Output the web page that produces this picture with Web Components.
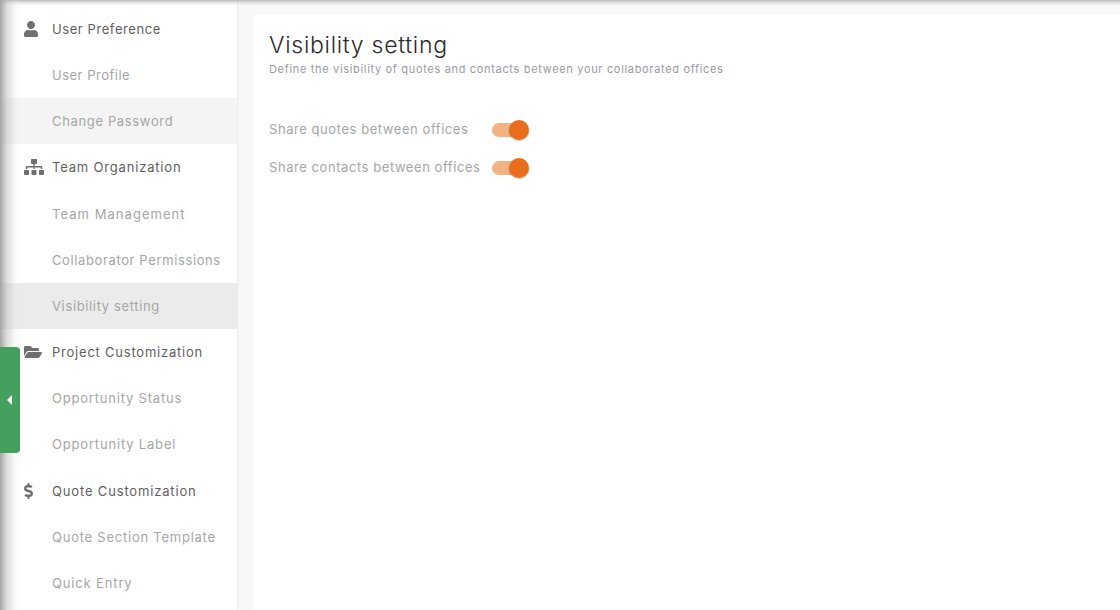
<!DOCTYPE html>
<html>
<head>
<meta charset="utf-8">
<title>Visibility setting</title>
<style>
  html, body { margin: 0; height: 610px; overflow: hidden; background: #f8f8f8; }
  body { font-family: Inter, "Liberation Sans", sans-serif; }
</style>
</head>
<body>
<settings-page>
  <settings-nav slot="nav">
    <nav-item icon="user" heading>User Preference</nav-item>
    <nav-item style="letter-spacing:.5px">User Profile</nav-item>
    <nav-item style="letter-spacing:.65px" hovered>Change Password</nav-item>
    <nav-item style="letter-spacing:.82px" icon="sitemap" heading>Team Organization</nav-item>
    <nav-item style="letter-spacing:1.05px">Team Management</nav-item>
    <nav-item style="letter-spacing:.62px">Collaborator Permissions</nav-item>
    <nav-item style="letter-spacing:.64px" active>Visibility setting</nav-item>
    <nav-item style="letter-spacing:.78px" icon="folder" heading>Project Customization</nav-item>
    <nav-item style="letter-spacing:.8px">Opportunity Status</nav-item>
    <nav-item style="letter-spacing:.82px">Opportunity Label</nav-item>
    <nav-item style="letter-spacing:.84px" icon="dollar" heading>Quote Customization</nav-item>
    <nav-item style="letter-spacing:.76px">Quote Section Template</nav-item>
    <nav-item style="letter-spacing:.85px">Quick Entry</nav-item>
  </settings-nav>
  <settings-card heading="Visibility setting" sub="Define the visibility of quotes and contacts between your collaborated offices">
    <toggle-row checked>Share quotes between offices</toggle-row>
    <toggle-row checked>Share contacts between offices</toggle-row>
  </settings-card>
  <collapse-tab slot="overlay"></collapse-tab>
</settings-page>

<script>
(function() {

    // Font Awesome style glyphs, viewBox width first
    const ICONS = {
        user: [448, 'M224 256c70.7 0 128-57.3 128-128S294.7 0 224 0 96 57.3 96 128s57.3 128 128 128zm89.6 32h-16.7c-22.2 10.2-46.9 16-72.9 16s-50.6-5.8-72.9-16h-16.7C60.2 288 0 348.2 0 422.4V464c0 26.5 21.5 48 48 48h352c26.5 0 48-21.5 48-48v-41.6c0-74.2-60.2-134.4-134.4-134.4z'],
        sitemap: [640, 'M128 352H32c-17.67 0-32 14.33-32 32v96c0 17.67 14.33 32 32 32h96c17.67 0 32-14.33 32-32v-96c0-17.67-14.33-32-32-32zm-24-80h192v48h48v-48h192v48h48v-57.59c0-21.17-17.23-38.41-38.41-38.41H344v-64h40c17.67 0 32-14.33 32-32V32c0-17.67-14.33-32-32-32H256c-17.67 0-32 14.33-32 32v96c0 17.67 14.33 32 32 32h40v64H94.41C73.23 224 56 241.23 56 262.41V320h48v-48zm264 80h-96c-17.67 0-32 14.33-32 32v96c0 17.67 14.33 32 32 32h96c17.67 0 32-14.33 32-32v-96c0-17.67-14.33-32-32-32zm240 0h-96c-17.67 0-32 14.33-32 32v96c0 17.67 14.33 32 32 32h96c17.67 0 32-14.33 32-32v-96c0-17.67-14.33-32-32-32z'],
        folder: [576, 'M572.694 292.093L500.27 416.248A63.997 63.997 0 0 1 444.989 448H45.025c-18.523 0-30.064-20.093-20.731-36.093l72.424-124.155A64 64 0 0 1 152 256h399.964c18.523 0 30.064 20.093 20.73 36.093zM152 224h328v-48c0-26.51-21.49-48-48-48H272l-64-64H48C21.49 64 0 85.49 0 112v278.046l69.077-118.418C86.214 242.25 117.989 224 152 224z'],
        dollar: [288, 'M209.2 233.4l-108-31.6C88.7 198.2 80 186.5 80 173.5c0-16.3 13.2-29.5 29.5-29.5h66.3c12.2 0 24.2 3.7 34.2 10.5 6.1 4.1 14.3 3.1 19.5-2l34.8-34c7.1-6.9 6.1-18.4-1.8-24.5C238 74.8 207.4 64.1 176 64V16c0-8.8-7.2-16-16-16h-32c-8.8 0-16 7.2-16 16v48h-2.5C45.8 64-5.4 118.7.5 183.6c4.2 46.1 39.4 83.6 83.8 96.6l102.5 30c12.5 3.7 21.2 15.3 21.2 28.3 0 16.3-13.2 29.5-29.5 29.5h-66.3C100 368 88 364.3 78 357.5c-6.1-4.1-14.3-3.1-19.5 2l-34.8 34c-7.1 6.9-6.1 18.4 1.8 24.5 24.5 19.2 55.1 29.9 86.5 30v48c0 8.8 7.2 16 16 16h32c8.8 0 16-7.2 16-16v-48.2c46.6-.9 90.3-28.6 105.7-72.7 21.5-61.6-14.6-124.8-72.5-141.7z']
    };

    class SettingsPage extends HTMLElement {
        constructor() {
            super();
            this.attachShadow({mode: 'open'});
            this.shadowRoot.innerHTML = `
                <style>
                  :host { display: block; position: relative; height: 610px; overflow: hidden; }
                  .layout { display: flex; height: 100%; gap: 16px; }
                  /* top and left edge shadows thrown by the app frame */
                  .edge-top, .edge-left { position: absolute; pointer-events: none; left: 0; top: 0; }
                  .edge-top { width: 100%; height: 6px; background: linear-gradient(#b9b9b9, rgba(200,200,200,.35) 50%, rgba(255,255,255,0)); }
                  .edge-left { width: 22px; height: 100%; background: linear-gradient(90deg, #a6a6a6, rgba(190,190,190,.55) 30%, rgba(230,230,230,.2) 70%, rgba(255,255,255,0)); }
                </style>
                <div class="layout"><slot name="nav"></slot><slot></slot></div>
                <div class="edge-top"></div>
                <div class="edge-left"></div>
                <slot name="overlay"></slot>`;
        }
    }

    class SettingsNav extends HTMLElement {
        constructor() {
            super();
            this.attachShadow({mode: 'open'});
            this.shadowRoot.innerHTML = `
                <style>
                  :host { display: block; flex: 0 0 237px; box-sizing: border-box; height: 610px; padding-top: 5.89px; background: #fff; box-shadow: 1px 0 2px rgba(0,0,0,.06); overflow: hidden; }
                </style>
                <slot></slot>`;
        }
    }

    class NavItem extends HTMLElement {
        constructor() {
            super();
            this.attachShadow({mode: 'open'});
            const icon = ICONS[this.getAttribute('icon')];
            const svg = icon ? `<svg viewBox="0 0 ${icon[0]} 512" height="16" width="${16 * icon[0] / 512}"><path fill="#6f6f6f" d="${icon[1]}"/></svg>` : '';
            this.shadowRoot.innerHTML = `
                <style>
                  :host { display: flex; align-items: center; height: 46.17px; padding-left: 24px; font-size: 13px; letter-spacing: .58px; color: #a6a6a6; }
                  :host([heading]) { color: #5f5f5f; }
                  :host([hovered]) { background: #f4f4f4; }
                  :host([active]) { background: #ebebeb; }
                  .ico { flex: 0 0 28px; display: flex; align-items: center; }
                </style>
                <span class="ico">${svg}</span><slot></slot>`;
        }
    }

    class SettingsCard extends HTMLElement {
        constructor() {
            super();
            this.attachShadow({mode: 'open'});
            this.shadowRoot.innerHTML = `
                <style>
                  :host { display: block; flex: 1; margin-top: 14px; padding: 16px; height: 640px; background: #fff; border-radius: 4px 0 0 0; box-shadow: 0 0 2px rgba(0,0,0,.05); }
                  h1 { margin: 0; font-size: 23px; line-height: 30px; font-weight: 300; letter-spacing: .72px; color: #2b2b2b; }
                  p { margin: 3px 0 41px; font-size: 11px; line-height: 13px; letter-spacing: .67px; color: #9a9aa3; }
                  .rows { display: flex; flex-direction: column; gap: 13px; }
                </style>
                <h1></h1>
                <p></p>
                <div class="rows"><slot></slot></div>`;
            this.shadowRoot.querySelector('h1').textContent = this.getAttribute('heading');
            this.shadowRoot.querySelector('p').textContent = this.getAttribute('sub');
        }
    }

    class ToggleRow extends HTMLElement {
        constructor() {
            super();
            this.attachShadow({mode: 'open'});
            this.shadowRoot.innerHTML = `
                <style>
                  :host { display: flex; align-items: center; gap: 12px; height: 25px; font-size: 13px; letter-spacing: .56px; color: #a6a6a6; }
                  .track { position: relative; width: 34px; height: 14px; border-radius: 7px; background: #f3b283; }
                  .knob { position: absolute; right: -3px; top: -3px; width: 20px; height: 20px; border-radius: 50%; background: #e96d1b; box-shadow: 0 1px 2px rgba(0,0,0,.25); }
                  .label { flex: 0 0 211px; white-space: nowrap; padding-bottom: 2px; }
                </style>
                <span class="label"><slot></slot></span>
                <span class="track"><span class="knob"></span></span>`;
        }
    }

    class CollapseTab extends HTMLElement {
        constructor() {
            super();
            this.attachShadow({mode: 'open'});
            this.shadowRoot.innerHTML = `
                <style>
                  :host { position: absolute; left: 0; top: 347px; z-index: 1; width: 20px; height: 106px; display: flex; align-items: center; justify-content: center; background: #43a05f; border-radius: 0 4px 4px 0; }
                  i { display: block; width: 0; height: 0; margin-left: -1px; border-style: solid; border-width: 5px 5px 5px 0; border-color: transparent #fff transparent transparent; }
                </style>
                <i></i>`;
        }
    }

    window.customElements.define('settings-page', SettingsPage);
    window.customElements.define('settings-nav', SettingsNav);
    window.customElements.define('nav-item', NavItem);
    window.customElements.define('settings-card', SettingsCard);
    window.customElements.define('toggle-row', ToggleRow);
    window.customElements.define('collapse-tab', CollapseTab);

})();
</script>
</body>
</html>
